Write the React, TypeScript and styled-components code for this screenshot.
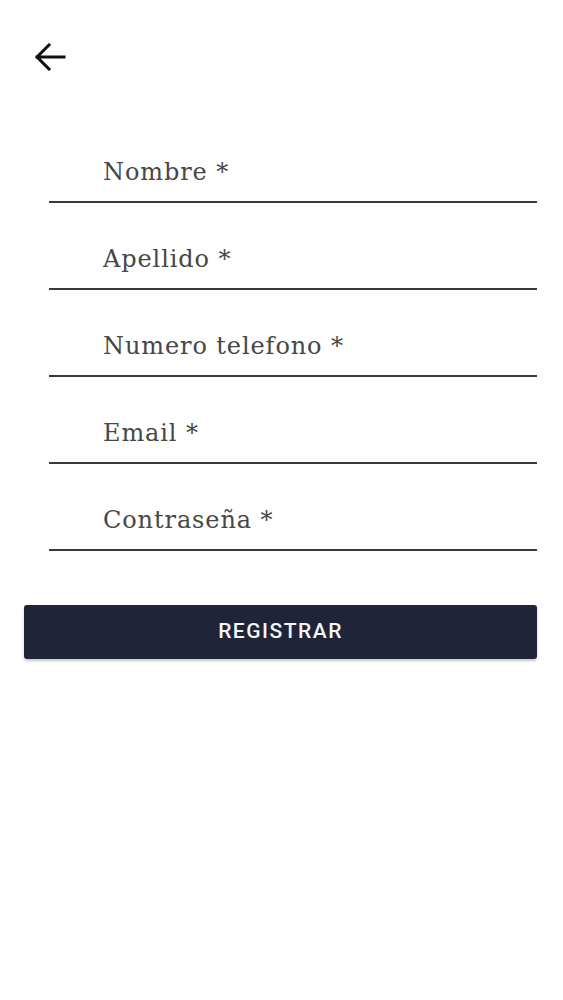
import React from "react";
import styled, { createGlobalStyle } from "styled-components";

const GlobalStyle = createGlobalStyle`
  html, body { margin: 0; padding: 0; background: #ffffff; }
  * { box-sizing: border-box; }
`;

const Page = styled.div`
  width: 563px;
  min-height: 1000px;
  background: #ffffff;
  display: flex;
  flex-direction: column;
`;

const TopBar = styled.div`
  height: 116px;
  padding: 43px 0 0 34px;
`;

const BackButton = styled.button`
  width: 32px;
  height: 28px;
  padding: 0;
  border: none;
  background: transparent;
  display: flex;
  align-items: center;
  justify-content: center;
  cursor: pointer;
`;

const Form = styled.form`
  display: flex;
  flex-direction: column;
  padding: 0 26px 0 49px;
`;

const Field = styled.label`
  height: 87px;
  display: flex;
  align-items: flex-end;
  border-bottom: 2px solid #3a3a3a;
  padding: 0 0 14px 54px;
`;

const Input = styled.input`
  width: 100%;
  border: none;
  outline: none;
  background: transparent;
  padding: 0;
  font-family: "DejaVu Serif", "Liberation Serif", serif;
  font-size: 24px;
  letter-spacing: 0.9px;
  line-height: 30px;
  color: #444444;
  &::placeholder { color: #474747; opacity: 1; }
`;

const Actions = styled.div`
  padding: 54px 26px 0 24px;
`;

const SubmitButton = styled.button`
  width: 100%;
  height: 54px;
  border: none;
  border-radius: 3px;
  background: #1f2439;
  color: #f4f5f8;
  font-family: Roboto, "Liberation Sans", sans-serif;
  font-weight: 500;
  font-size: 21px;
  letter-spacing: 1.5px;
  padding: 0 0 3px;
  box-shadow: 0 2px 3px rgba(0, 0, 0, 0.22);
  cursor: pointer;
`;

const fields = ["Nombre *", "Apellido *", "Numero telefono *", "Email *", "Contraseña *"];

export default function App() {
  return (
    <>
      <GlobalStyle />
      <Page>
        <TopBar>
          <BackButton type="button" aria-label="Volver">
            <svg width="32" height="28" viewBox="0 0 32 28" fill="none">
              <path d="M30 14H3M15 2L3 14l12 12" stroke="#111" strokeWidth="3" strokeLinecap="square" />
            </svg>
          </BackButton>
        </TopBar>
        <Form onSubmit={(e) => e.preventDefault()}>
          {fields.map((f) => (
            <Field key={f}>
              <Input placeholder={f} />
            </Field>
          ))}
        </Form>
        <Actions>
          <SubmitButton type="button">REGISTRAR</SubmitButton>
        </Actions>
      </Page>
    </>
  );
}
